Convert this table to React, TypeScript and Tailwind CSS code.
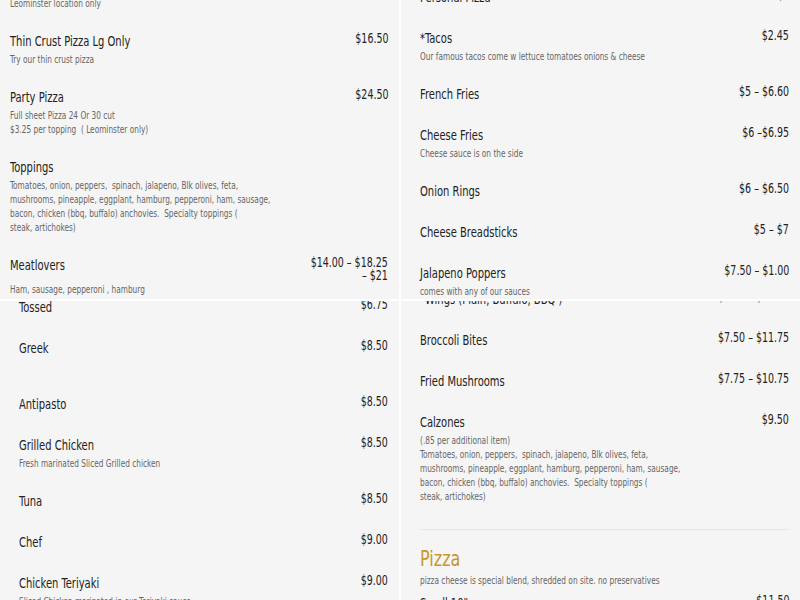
import React from "react";

type Item = { title: string; price?: string[]; desc?: string[]; emptyDesc?: boolean };

function MenuItem({ item }: { item: Item }) {
  return (
    <div className="pb-[20px]">
      <div className="flex justify-between items-start gap-4">
        <div className="text-[13.5px] leading-[21px] text-[#222] whitespace-nowrap origin-left scale-x-[0.82]">
          {item.title}
        </div>
        {item.price && (
          <div className="text-[13.5px] leading-[13px] mt-[1px] text-[#222] text-right whitespace-nowrap origin-right scale-x-[0.78]">
            {item.price.map((p, i) => (
              <div key={i}>{p}</div>
            ))}
          </div>
        )}
      </div>
      {item.desc && (
        <div className="mt-[1px] text-[10px] leading-[14px] text-[#666]">
          {item.desc.map((d, i) => (
            <div key={i} className="whitespace-pre origin-left scale-x-[0.82]">
              {d}
            </div>
          ))}
        </div>
      )}
      {item.emptyDesc && <div className="mt-[1px] h-[14px]" />}
    </div>
  );
}

const toppings = [
  "Tomatoes, onion, peppers,  spinach, jalapeno, Blk olives, feta,",
  "mushrooms, pineapple, eggplant, hamburg, pepperoni, ham, sausage,",
  "bacon, chicken (bbq, buffalo) anchovies.  Specialty toppings (",
  "steak, artichokes)",
];

const topLeft: Item[] = [
  { title: "Thin Crust Pizza Lg Only", price: ["$16.50"], desc: ["Try our thin crust pizza"] },
  { title: "Party Pizza", price: ["$24.50"], desc: ["Full sheet Pizza 24 Or 30 cut", "$3.25 per topping  ( Leominster only)"] },
  { title: "Toppings", desc: toppings },
  { title: "Meatlovers", price: ["$14.00 – $18.25", "– $21"], desc: ["Ham, sausage, pepperoni , hamburg"] },
];

const bottomLeft: Item[] = [
  { title: "Tossed", price: ["$6.75"] },
  { title: "Greek", price: ["$8.50"], emptyDesc: true },
  { title: "Antipasto", price: ["$8.50"] },
  { title: "Grilled Chicken", price: ["$8.50"], desc: ["Fresh marinated Sliced Grilled chicken"] },
  { title: "Tuna", price: ["$8.50"] },
  { title: "Chef", price: ["$9.00"] },
  { title: "Chicken Teriyaki", price: ["$9.00"], desc: ["Sliced Chicken marinated in our Teriyaki sauce"] },
];

const topRight: Item[] = [
  { title: "Personal Pizza", price: ["$8"] },
  { title: "*Tacos", price: ["$2.45"], desc: ["Our famous tacos come w lettuce tomatoes onions & cheese"] },
  { title: "French Fries", price: ["$5 – $6.60"] },
  { title: "Cheese Fries", price: ["$6 –$6.95"], desc: ["Cheese sauce is on the side"] },
  { title: "Onion Rings", price: ["$6 – $6.50"] },
  { title: "Cheese Breadsticks", price: ["$5 – $7"] },
  { title: "Jalapeno Poppers", price: ["$7.50 – $1.00"], desc: ["comes with any of our sauces"] },
];

const bottomRight: Item[] = [
  { title: "*Wings (Plain, Buffalo, BBQ )", price: ["$9.25 – $15.25"] },
  { title: "Broccoli Bites", price: ["$7.50 – $11.75"] },
  { title: "Fried Mushrooms", price: ["$7.75 – $10.75"] },
  { title: "Calzones", price: ["$9.50"], desc: ["(.85 per additional item)", ...toppings] },
];

export default function App() {
  return (
    <div className="w-[800px] h-[600px] bg-white grid grid-cols-[399px_399px] grid-rows-[299px_299px] gap-[2px] font-['Liberation_Sans_Narrow','DejaVu_Sans_Condensed',sans-serif]">
      {/* top-left */}
      <div className="bg-[#f5f5f5] overflow-hidden pl-[10px] pr-[11px]">
        <div className="-mt-[3px] pb-[20px] text-[10px] leading-[14px] text-[#666] origin-left scale-x-[0.82]">
          Leominster location only
        </div>
        {topLeft.map((it, i) => (
          <MenuItem key={i} item={it} />
        ))}
      </div>
      {/* top-right */}
      <div className="bg-[#f5f5f5] overflow-hidden pl-[19px] pr-[11px]">
        <div className="-mt-[13px]">
          {topRight.map((it, i) => (
            <MenuItem key={i} item={it} />
          ))}
        </div>
      </div>
      {/* bottom-left */}
      <div className="bg-[#f5f5f5] overflow-hidden pl-[19px] pr-[11px]">
        <div className="-mt-[4px]">
          {bottomLeft.map((it, i) => (
            <MenuItem key={i} item={it} />
          ))}
        </div>
      </div>
      {/* bottom-right */}
      <div className="bg-[#f5f5f5] overflow-hidden pl-[19px] pr-[11px]">
        <div className="-mt-[12px]">
          {bottomRight.map((it, i) => (
            <MenuItem key={i} item={it} />
          ))}
          <div className="mt-[5px] border-t border-[#e6e6e6]" />
          <div className="mt-[15px] text-[21px] leading-[28px] text-[#c9952e] origin-left scale-x-[0.85]">Pizza</div>
          <div className="mt-[1px] text-[10px] leading-[14px] text-[#666] whitespace-nowrap origin-left scale-x-[0.82]">
            pizza cheese is special blend, shredded on site. no preservatives
          </div>
          <div className="mt-[5px]">
            <MenuItem item={{ title: "Small 10\"", price: ["$11.50"] }} />
          </div>
        </div>
      </div>
    </div>
  );
}
